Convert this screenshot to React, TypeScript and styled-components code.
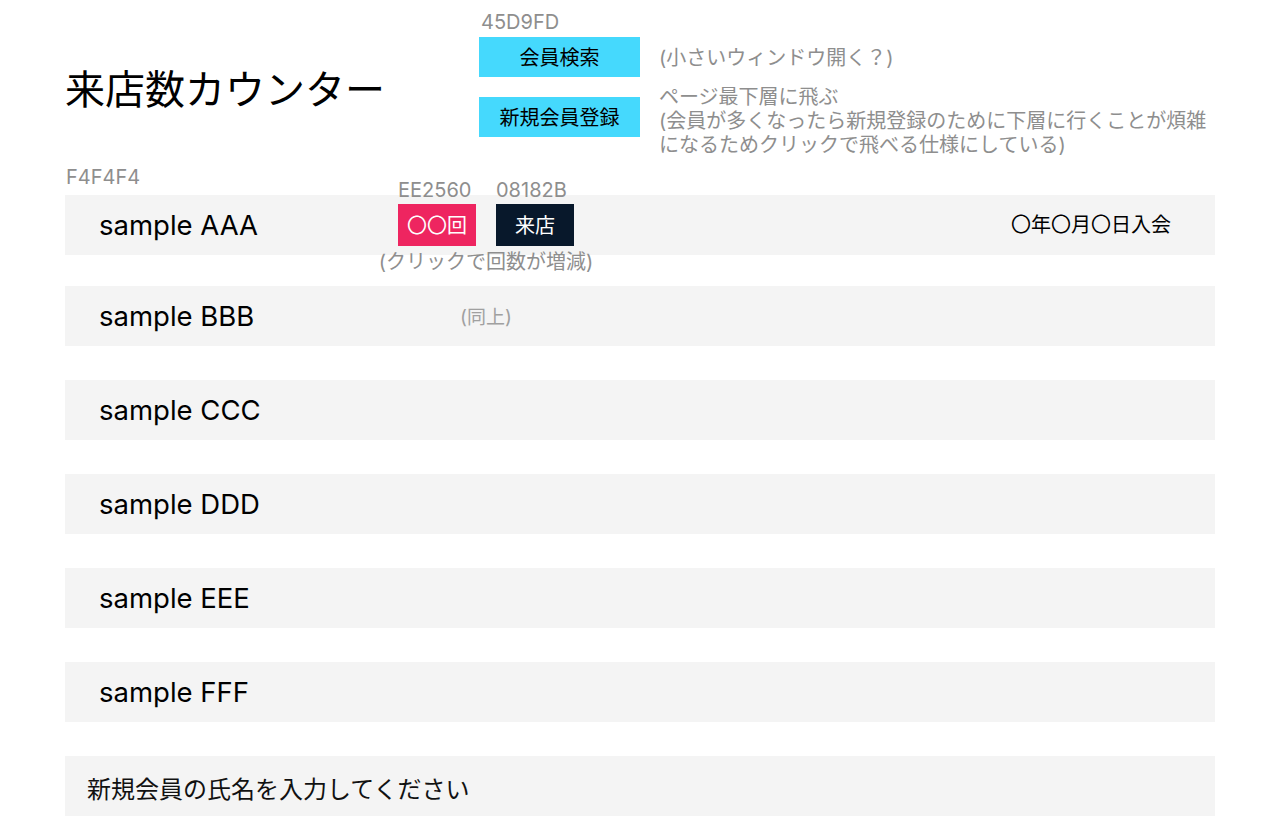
import React from "react";
import styled, { createGlobalStyle } from "styled-components";

/** Colors */
const ACCENT = "#45D9FD";
const ROW_BG = "#F4F4F4";
const COUNT_BG = "#EE2560";
const VISIT_BG = "#08182B";
const NOTE = "#8e8e8e";

const members = ["AAA", "BBB", "CCC", "DDD", "EEE", "FFF"];

const GlobalStyle = createGlobalStyle`
  html, body {
    margin: 0;
    padding: 0;
    background: #ffffff;
  }
  body {
    font-family: Inter, "Noto Sans CJK JP", sans-serif;
    color: #000000;
  }
`;

export default function App() {
  return (
    <>
      <GlobalStyle />
      <Page>
        <Header>
          <Title>来店数カウンター</Title>
          <ColorLabel $col={2} $row={1}>
            45D9FD
          </ColorLabel>
          <ActionButton $row={2}>会員検索</ActionButton>
          <Note $row={2}>(小さいウィンドウ開く？)</Note>
          <ActionButton $row={3} $offset={20}>
            新規会員登録
          </ActionButton>
          <Note $row={3} $offset={8}>
            ページ最下層に飛ぶ
            <br />
            (会員が多くなったら新規登録のために下層に行くことが煩雑
            <br />
            になるためクリックで飛べる仕様にしている)
          </Note>
        </Header>

        <RowLabel>F4F4F4</RowLabel>

        <MemberList>
          {members.map((name, i) => (
            <MemberRow key={name}>
              <MemberName>sample {name}</MemberName>
              {i === 0 && (
                <>
                  <Controls>
                    <CountButton>
                      <HexTag>EE2560</HexTag>
                      〇〇回
                    </CountButton>
                    <VisitButton>
                      <HexTag>08182B</HexTag>
                      来店
                    </VisitButton>
                    <ControlsNote>(クリックで回数が増減)</ControlsNote>
                  </Controls>
                  <JoinDate>〇年〇月〇日入会</JoinDate>
                </>
              )}
              {i === 1 && (
                <Controls>
                  <SameNote>(同上)</SameNote>
                </Controls>
              )}
            </MemberRow>
          ))}
          <NewMemberRow>
            <NameInput placeholder="新規会員の氏名を入力してください" />
          </NewMemberRow>
        </MemberList>
      </Page>
    </>
  );
}

/** Styled Component */
const Page = styled.div`
  width: 1280px;
  padding: 10px 65px 0;
  box-sizing: border-box;
`;

const Header = styled.header`
  display: grid;
  grid-template-columns: 414px 161px 1fr;
  grid-template-rows: auto auto auto;
`;

const Title = styled.h1`
  grid-column: 1;
  grid-row: 2 / 4;
  align-self: center;
  margin: 0 0 14px 0;
  font-size: 40px;
  font-weight: 400;
  line-height: 48px;
  white-space: nowrap;
`;

const ColorLabel = styled.div<{ $col: number; $row: number }>`
  grid-column: ${props => props.$col};
  grid-row: ${props => props.$row};
  margin: 0 0 3px 2px;
  font-size: 20px;
  line-height: 24px;
  color: ${NOTE};
`;

const ActionButton = styled.button<{ $row: number; $offset?: number }>`
  grid-column: 2;
  grid-row: ${props => props.$row};
  align-self: start;
  margin-top: ${props => props.$offset || 0}px;
  height: 40px;
  padding: 0 0 1px;
  border: none;
  background: ${ACCENT};
  font-family: inherit;
  font-size: 20px;
  color: #000000;
  cursor: pointer;
`;

const Note = styled.div<{ $row: number; $offset?: number }>`
  grid-column: 3;
  grid-row: ${props => props.$row};
  align-self: ${props => (props.$offset ? "start" : "center")};
  margin-top: ${props => props.$offset || 2}px;
  padding-left: 19px;
  font-size: 20px;
  line-height: 24px;
  color: ${NOTE};
  white-space: nowrap;
`;

const RowLabel = styled.div`
  margin: 8px 0 6px 1px;
  font-size: 20px;
  line-height: 24px;
  color: ${NOTE};
`;

const MemberList = styled.div`
  display: flex;
  flex-direction: column;
  gap: 34px;

  & > :first-child {
    margin-bottom: -3px;
  }
`;

const MemberRow = styled.div`
  display: flex;
  align-items: center;
  height: 60px;
  padding: 0 44px 0 34px;
  background: ${ROW_BG};
`;

const MemberName = styled.div`
  width: 299px;
  flex-shrink: 0;
  font-size: 27.5px;
  line-height: 34px;
  white-space: nowrap;
`;

const Controls = styled.div`
  position: relative;
  display: flex;
  justify-content: center;
  gap: 20px;
  width: 176px;
`;

const SquareButton = styled.button`
  position: relative;
  width: 78px;
  height: 42px;
  padding: 0 0 2px;
  border: none;
  font-family: inherit;
  font-size: 20px;
  color: #ffffff;
  cursor: pointer;
`;

const CountButton = styled(SquareButton)`
  background: ${COUNT_BG};
`;

const VisitButton = styled(SquareButton)`
  background: ${VISIT_BG};
`;

const HexTag = styled.span`
  position: absolute;
  left: 0;
  bottom: calc(100% + 2px);
  font-size: 20px;
  line-height: 24px;
  color: ${NOTE};
  white-space: nowrap;
`;

const ControlsNote = styled.span`
  position: absolute;
  left: 50%;
  top: calc(100% + 4px);
  transform: translateX(-50%);
  font-size: 20px;
  line-height: 24px;
  color: ${NOTE};
  white-space: nowrap;
`;

const SameNote = styled.span`
  margin-top: 4px;
  font-size: 19px;
  line-height: 24px;
  color: #a0a0a0;
`;

const JoinDate = styled.div`
  margin-left: auto;
  font-size: 20px;
  line-height: 24px;
  white-space: nowrap;
`;

const NewMemberRow = styled.div`
  display: flex;
  align-items: center;
  height: 60px;
  background: ${ROW_BG};
`;

const NameInput = styled.input`
  flex: 1;
  height: 100%;
  padding: 6px 0 0 22px;
  box-sizing: border-box;
  border: none;
  outline: none;
  background: transparent;
  font-family: inherit;
  font-size: 24px;
  color: #111111;

  &::placeholder {
    color: #111111;
    opacity: 1;
  }
`;
